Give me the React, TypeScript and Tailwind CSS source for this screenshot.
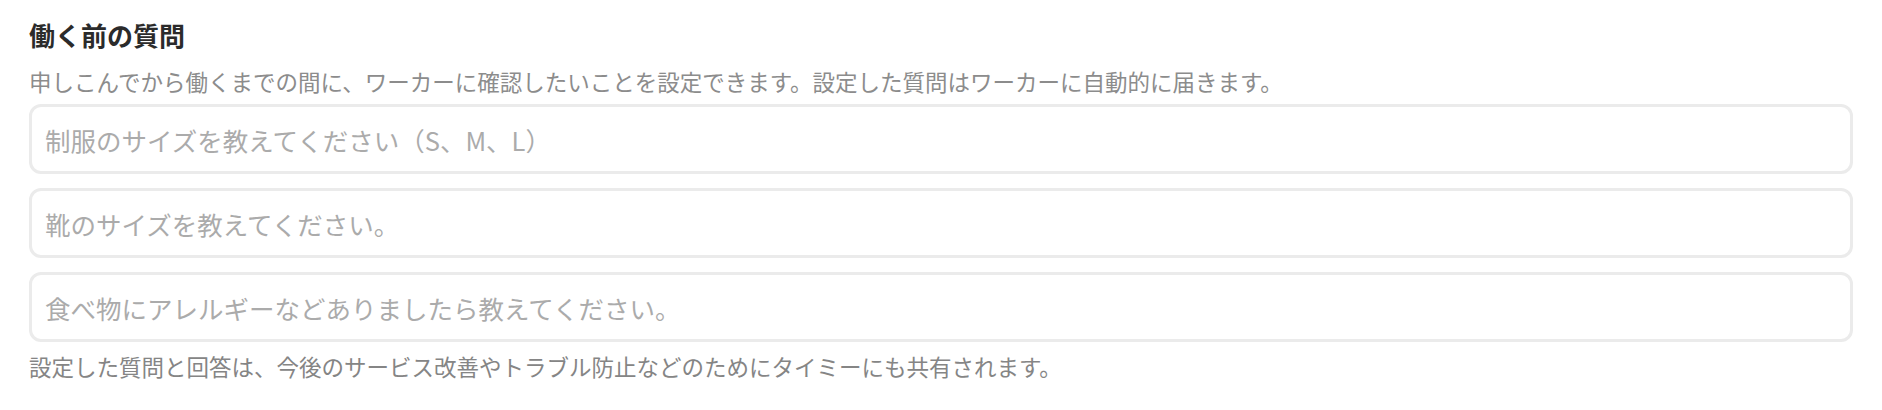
import React from 'react';

const questions = [
  '制服のサイズを教えてください（S、M、L）',
  '靴のサイズを教えてください。',
  '食べ物にアレルギーなどありましたら教えてください。',
];

const PreWorkQuestions = () => {
  return (
    <section className="px-[29px] pt-[17px] pb-6">
      <h2 className="text-[26px] leading-[36px] font-bold text-[#2b2b2b]">働く前の質問</h2>
      <p className="mt-[12px] text-[22.5px] leading-[32px] text-[#8c8c8c]">
        申しこんでから働くまでの間に、ワーカーに確認したいことを設定できます。設定した質問はワーカーに自動的に届きます。
      </p>
      <div className="mt-[7px] flex flex-col gap-[14px]">
        {questions.map((q) => (
          <input
            key={q}
            type="text"
            placeholder={q}
            className="h-[70px] w-full rounded-[12px] border-[3px] border-[#ebebeb] bg-white px-[13px] text-[25.5px] text-[#333] outline-none placeholder:text-[#ababab]"
          />
        ))}
      </div>
      <p className="mt-[8px] text-[22.5px] leading-[32px] text-[#858585]">
        設定した質問と回答は、今後のサービス改善やトラブル防止などのためにタイミーにも共有されます。
      </p>
    </section>
  );
};

export default function App() {
  return (
    <div
      className="min-h-screen w-full bg-white"
      style={{ fontFamily: '"Noto Sans CJK JP", "Noto Sans", sans-serif' }}
    >
      <PreWorkQuestions />
    </div>
  );
}
